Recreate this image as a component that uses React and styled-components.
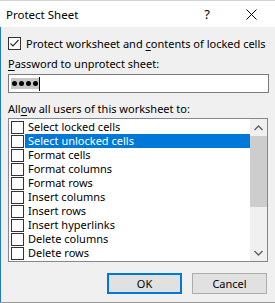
import React from "react";
import styled, { createGlobalStyle } from "styled-components";

const Global = createGlobalStyle`
  html, body { margin: 0; padding: 0; background: #f0f0f0; }
  * { box-sizing: border-box; }
`;

const Window = styled.div`
  width: 275px;
  height: 303px;
  display: flex;
  flex-direction: column;
  background: #f0f0f0;
  border-top: 1px solid #d4d4d4;
  border-bottom: 1px solid #9a9a9a;
  font-family: "Noto Sans", "Open Sans", sans-serif;
  font-size: 11px;
  color: #000;
  overflow: hidden;
  white-space: nowrap;
`;

const TitleBar = styled.div`
  height: 26px;
  flex: none;
  background: #fff;
  display: flex;
  align-items: center;
  padding-left: 6px;
  padding-right: 2px;
`;

const Title = styled.div`
  flex: 1;
  font-size: 11.5px;
  line-height: 16px;
  margin-top: 1px;
`;

const TitleButton = styled.div`
  width: 44px;
  height: 26px;
  display: flex;
  align-items: center;
  justify-content: center;
  font-size: 13px;
`;

const Body = styled.div`
  flex: 1;
  border-left: 1px solid #1f7ad2;
  padding: 10px 7px 0 7px;
  display: flex;
  flex-direction: column;
`;

const CheckRow = styled.label`
  display: flex;
  align-items: center;
  height: 13px;
  gap: 5px;
  line-height: 13px;
`;

const Box = styled.span`
  width: 13px;
  height: 13px;
  flex: none;
  border: 1px solid #333;
  background: #fff;
  display: flex;
  align-items: center;
  justify-content: center;
`;

const U = styled.span`
  text-decoration: underline;
  text-underline-offset: 2px;
`;

const Label = styled.div`
  line-height: 14px;
  height: 14px;
  margin-top: ${(p) => p.mt}px;
`;

const Input = styled.div`
  margin-top: 3px;
  width: 261px;
  height: 19px;
  border: 1px solid #7a7a7a;
  background: #fff;
  display: flex;
  align-items: center;
  padding-left: 2px;
`;

const Selection = styled.span`
  background: #c6c6c6;
  height: 11px;
  display: flex;
  align-items: center;
  gap: 2px;
  padding: 0 1px;
`;

const Dot = styled.span`
  width: 5px;
  height: 5px;
  border-radius: 50%;
  background: #000;
`;

const Caret = styled.span`
  width: 1px;
  height: 14px;
  background: #000;
`;

const ListBox = styled.div`
  margin-top: 2px;
  width: 260px;
  height: 144px;
  border: 1px solid #828790;
  background: #fff;
  display: flex;
`;

const Items = styled.div`
  flex: 1;
  padding-top: 1px;
  display: flex;
  flex-direction: column;
`;

const Item = styled.div`
  height: 14px;
  display: flex;
  align-items: center;
  padding-left: 2px;
`;

const ItemText = styled.span`
  flex: 1;
  margin-left: 1px;
  height: 14px;
  line-height: 14px;
  padding-left: 3px;
  background: ${(p) => (p.sel ? "#0078d7" : "transparent")};
  color: ${(p) => (p.sel ? "#fff" : "#000")};
`;

const ScrollBar = styled.div`
  width: 17px;
  flex: none;
  background: #f0f0f0;
  display: flex;
  flex-direction: column;
`;

const Arrow = styled.div`
  height: 17px;
  display: flex;
  align-items: center;
  justify-content: center;
`;

const Track = styled.div`
  flex: 1;
  display: flex;
  flex-direction: column;
`;

const Thumb = styled.div`
  height: 71px;
  background: #cdcdcd;
`;

const Buttons = styled.div`
  margin-top: 11px;
  display: flex;
  justify-content: flex-end;
  gap: 10px;
  padding-right: 1px;
`;

const Button = styled.div`
  width: 75px;
  height: 21px;
  background: #e1e1e1;
  border: ${(p) => (p.def ? "2px solid #0078d7" : "1px solid #adadad")};
  display: flex;
  align-items: center;
  justify-content: center;
  line-height: 14px;
`;

const items = [
  "Select locked cells",
  "Select unlocked cells",
  "Format cells",
  "Format columns",
  "Format rows",
  "Insert columns",
  "Insert rows",
  "Insert hyperlinks",
  "Delete columns",
  "Delete rows",
];

export default function App() {
  return (
    <>
      <Global />
      <Window>
        <TitleBar>
          <Title>Protect Sheet</Title>
          <TitleButton>?</TitleButton>
          <TitleButton>
            <svg width="11" height="11" viewBox="0 0 11 11">
              <path d="M0.5 0.5 L10.5 10.5 M10.5 0.5 L0.5 10.5" stroke="#000" strokeWidth="1" />
            </svg>
          </TitleButton>
        </TitleBar>
        <Body>
          <CheckRow>
            <Box>
              <svg width="11" height="11" viewBox="0 0 11 11">
                <path d="M1.5 5.5 L4 8 L9.5 2" stroke="#333" strokeWidth="1.2" fill="none" />
              </svg>
            </Box>
            <span>
              Protect worksheet and <U>c</U>ontents of locked cells
            </span>
          </CheckRow>
          <Label mt={7}>
            <U>P</U>assword to unprotect sheet:
          </Label>
          <Input>
            <Selection>
              <Dot />
              <Dot />
              <Dot />
              <Dot />
            </Selection>
            <Caret />
          </Input>
          <Label mt={9}>
            All<U>o</U>w all users of this worksheet to:
          </Label>
          <ListBox>
            <Items>
              {items.map((t, i) => (
                <Item key={t}>
                  <Box />
                  <ItemText sel={i === 1}>{t}</ItemText>
                </Item>
              ))}
            </Items>
            <ScrollBar>
              <Arrow>
                <svg width="9" height="6" viewBox="0 0 9 6">
                  <path d="M0.5 5 L4.5 1 L8.5 5" stroke="#606060" strokeWidth="1.4" fill="none" />
                </svg>
              </Arrow>
              <Track>
                <Thumb />
              </Track>
              <Arrow>
                <svg width="9" height="6" viewBox="0 0 9 6">
                  <path d="M0.5 1 L4.5 5 L8.5 1" stroke="#606060" strokeWidth="1.4" fill="none" />
                </svg>
              </Arrow>
            </ScrollBar>
          </ListBox>
          <Buttons>
            <Button def>OK</Button>
            <Button>Cancel</Button>
          </Buttons>
        </Body>
      </Window>
    </>
  );
}
